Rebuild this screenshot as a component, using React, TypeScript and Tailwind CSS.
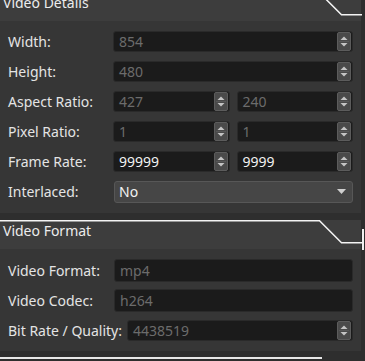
import React from "react";

const SpinButtons = () => (
  <div className="w-[14px] h-[19px] mr-[1px] rounded-[2px] border border-[#5c5c5c] bg-[#4a4a4a] shrink-0 flex items-center justify-center">
    <svg width="12" height="17" viewBox="0 0 12 17">
      <polygon points="2.5,7 6,3.5 9.5,7" fill="#c4c4c4" />
      <line x1="1" y1="8.5" x2="11" y2="8.5" stroke="#585858" strokeWidth="1" />
      <polygon points="2.5,10 6,13.5 9.5,10" fill="#c4c4c4" />
    </svg>
  </div>
);

const SpinBox = ({ value, enabled = false, className = "" }: { value: string; enabled?: boolean; className?: string }) => (
  <div className={`h-[21px] flex items-center bg-[#1b1b1b] border border-[#2a2a2a] rounded-[3px] ${className}`}>
    <span className={`flex-1 pl-[5px] text-[14px] leading-[19px] ${enabled ? "text-[#f2f2f2]" : "text-[#6c6c6c]"}`}>{value}</span>
    <SpinButtons />
  </div>
);

const LineEdit = ({ value, className = "" }: { value: string; className?: string }) => (
  <div className={`h-[23px] flex items-center bg-[#1b1b1b] border border-[#2a2a2a] rounded-[3px] pl-[5px] ${className}`}>
    <span className="text-[14px] leading-[19px] text-[#6c6c6c]">{value}</span>
  </div>
);

const Row = ({ label, labelW, children }: { label: string; labelW: string; children: React.ReactNode }) => (
  <div className="h-[23px] flex items-center">
    <div className={`${labelW} shrink-0 text-[14px] leading-[20px] text-[#e4e4e4]`}>{label}</div>
    <div className="flex-1 flex gap-[7px]">{children}</div>
  </div>
);

const Header = ({ title, className = "" }: { title: string; className?: string }) => (
  <div className={`relative h-[29px] bg-[#3d3d3d] ${className}`}>
    <svg className="absolute left-0 top-0" width="365" height="29" viewBox="0 0 365 29">
      <polyline points="0,0.75 319.5,0.75 341.5,22.75 362,22.75" fill="none" stroke="#f4f4f4" strokeWidth="1.5" />
    </svg>
    <div className="pl-[3px] pt-[1px] text-[14px] leading-[20px] text-[#ececec]">{title}</div>
  </div>
);

export default function App() {
  return (
    <div
      className="relative w-[365px] h-[361px] overflow-hidden bg-[#2e2e2e]"
      style={{ fontFamily: '"Noto Sans", "DejaVu Sans", sans-serif' }}
    >
      <div className="w-[361px]">
        <Header title="Video Details" className="-mt-[8px]" />
        <div className="bg-[#363636] pt-[9px] pb-[10px] pl-[8px] pr-[8px] flex flex-col gap-[7px]">
          <Row label="Width:" labelW="w-[105px]">
            <SpinBox value="854" className="flex-1" />
          </Row>
          <Row label="Height:" labelW="w-[105px]">
            <SpinBox value="480" className="flex-1" />
          </Row>
          <Row label="Aspect Ratio:" labelW="w-[105px]">
            <SpinBox value="427" className="flex-1" />
            <SpinBox value="240" className="flex-1" />
          </Row>
          <Row label="Pixel Ratio:" labelW="w-[105px]">
            <SpinBox value="1" className="flex-1" />
            <SpinBox value="1" className="flex-1" />
          </Row>
          <Row label="Frame Rate:" labelW="w-[105px]">
            <SpinBox value="99999" enabled className="flex-1" />
            <SpinBox value="9999" enabled className="flex-1" />
          </Row>
          <Row label="Interlaced:" labelW="w-[106px]">
            <div className="flex-1 h-[22px] flex items-center justify-between bg-[#464646] border border-[#575757] rounded-[3px] pl-[4px] pr-[6px]">
              <span className="text-[14px] leading-[19px] text-[#f2f2f2]">No</span>
              <svg width="9" height="5" viewBox="0 0 9 5">
                <polygon points="0,0 9,0 4.5,5" fill="#cfcfcf" />
              </svg>
            </div>
          </Row>
        </div>
        <div className="h-[7px]" />
        <Header title="Video Format" />
        <div className="bg-[#363636] pt-[10px] pb-[9px] pl-[8px] pr-[8px] flex flex-col gap-[7px]">
          <Row label="Video Format:" labelW="w-[106px]">
            <LineEdit value="mp4" className="flex-1" />
          </Row>
          <Row label="Video Codec:" labelW="w-[106px]">
            <LineEdit value="h264" className="flex-1" />
          </Row>
          <Row label="Bit Rate / Quality:" labelW="w-[119px]">
            <SpinBox value="4438519" className="flex-1" />
          </Row>
        </div>
        <div className="h-[6px]" />
        <div className="h-[2px] w-[322px] bg-[#e8e8e8]" />
      </div>
      <div className="absolute left-[362px] top-[229px] w-[1.5px] h-[21px] bg-[#f0f0f0]" />
    </div>
  );
}
